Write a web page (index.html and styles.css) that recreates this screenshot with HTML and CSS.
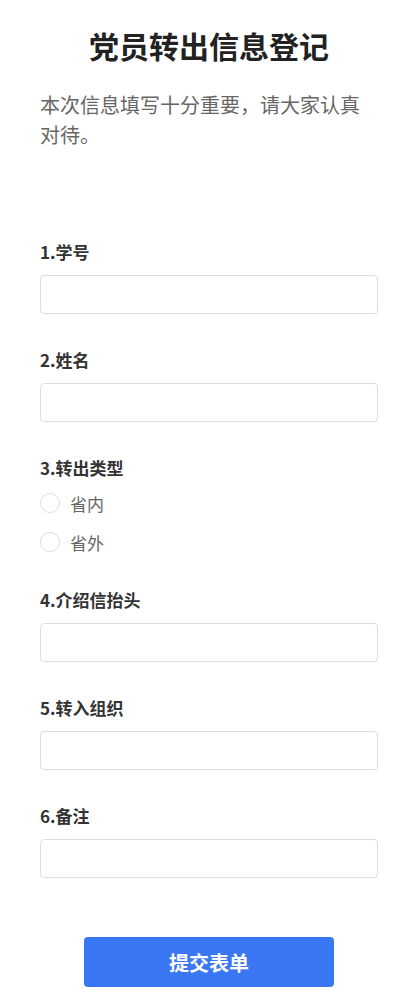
FILE: index.html
```html
<!DOCTYPE html>
<html lang="zh-CN">
<head>
    <meta charset="UTF-8">
    <meta name="viewport" content="width=device-width, initial-scale=1.0">
    <title>党员转出信息登记</title>
    <link rel="stylesheet" href="styles.css">
</head>
<body>
    <div class="page">
        <h1 class="title">党员转出信息登记</h1>
        <p class="desc">本次信息填写十分重要，请大家认真对待。</p>

        <form class="form">
            <div class="field">
                <label class="field-label">1.学号</label>
                <input class="field-input" type="text">
            </div>

            <div class="field">
                <label class="field-label">2.姓名</label>
                <input class="field-input" type="text">
            </div>

            <div class="field">
                <label class="field-label">3.转出类型</label>
                <div class="radios">
                    <label class="radio"><input type="radio" name="type"><span>省内</span></label>
                    <label class="radio"><input type="radio" name="type"><span>省外</span></label>
                </div>
            </div>

            <div class="field">
                <label class="field-label">4.介绍信抬头</label>
                <input class="field-input" type="text">
            </div>

            <div class="field">
                <label class="field-label">5.转入组织</label>
                <input class="field-input" type="text">
            </div>

            <div class="field">
                <label class="field-label">6.备注</label>
                <input class="field-input" type="text">
            </div>

            <div class="actions">
                <button class="submit" type="button">提交表单</button>
            </div>
        </form>
    </div>
</body>
</html>
```

FILE: styles.css
```css
* {
    box-sizing: border-box;
    font-family: "Noto Sans CJK SC", "Noto Sans", sans-serif;
}

body {
    margin: 0;
    background-color: #fff;
}

.page {
    padding: 25px 40px 20px;
}

.title {
    margin: 0;
    font-size: 30px;
    line-height: 40px;
    font-weight: bold;
    color: #222;
    text-align: center;
}

.desc {
    margin: 25px 0 0;
    font-size: 20px;
    line-height: 30px;
    color: #666;
}

.form {
    margin-top: 90px;
}

.field {
    margin-bottom: 34px;
}

.field-label {
    display: block;
    margin-bottom: 11px;
    font-size: 17px;
    line-height: 24px;
    font-weight: bold;
    color: #333;
}

.field-input {
    display: block;
    width: 100%;
    height: 39px;
    margin: 0;
    padding: 0 10px;
    border: 1px solid #ddd;
    border-radius: 4px;
    font-size: 16px;
    outline: none;
}

.radios {
    display: flex;
    flex-direction: column;
    gap: 15px;
}

.radio {
    display: flex;
    align-items: center;
    height: 24px;
    font-size: 17px;
    color: #666;
}

.radio input {
    appearance: none;
    -webkit-appearance: none;
    width: 20px;
    height: 20px;
    margin: 0 10px 0 0;
    border: 1px solid #ddd;
    border-radius: 50%;
}

.actions {
    display: flex;
    justify-content: center;
    padding-top: 25px;
}

.submit {
    width: 250px;
    height: 50px;
    border: none;
    border-radius: 4px;
    background-color: #3a77f5;
    color: #fff;
    font-size: 20px;
    font-weight: bold;
    cursor: pointer;
}
```
